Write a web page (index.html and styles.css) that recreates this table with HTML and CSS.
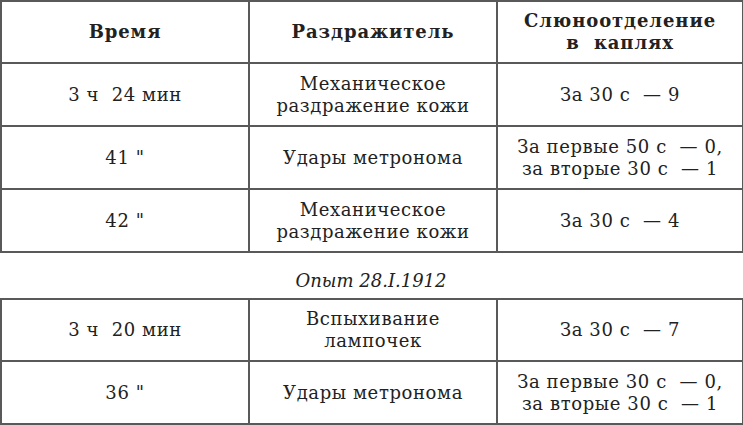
FILE: index.html
```html
<!DOCTYPE html>
<html lang="ru">
<head>
<meta charset="utf-8">
<link rel="stylesheet" href="styles.css">
</head>
<body>
<div class="page">
  <table class="grid">
    <colgroup><col class="c1"><col class="c2"><col class="c3"></colgroup>
    <tr class="first">
      <th>Время</th>
      <th>Раздражитель</th>
      <th>Слюноотделение<br>в&nbsp; каплях</th>
    </tr>
    <tr>
      <td>3 ч&nbsp; 24 мин</td>
      <td>Механическое<br>раздражение кожи</td>
      <td>За 30 с&nbsp; — 9</td>
    </tr>
    <tr>
      <td>41 "</td>
      <td>Удары метронома</td>
      <td>За первые 50 с&nbsp; — 0,<br>за вторые 30 с&nbsp; — 1</td>
    </tr>
    <tr>
      <td>42 "</td>
      <td>Механическое<br>раздражение кожи</td>
      <td>За 30 с&nbsp; — 4</td>
    </tr>
  </table>
  <p class="caption">Опыт 28.I.1912</p>
  <table class="grid">
    <colgroup><col class="c1"><col class="c2"><col class="c3"></colgroup>
    <tr class="first">
      <td>3 ч&nbsp; 20 мин</td>
      <td>Вспыхивание<br>лампочек</td>
      <td>За 30 с&nbsp; — 7</td>
    </tr>
    <tr>
      <td>36 "</td>
      <td>Удары метронома</td>
      <td>За первые 30 с&nbsp; — 0,<br>за вторые 30 с&nbsp; — 1</td>
    </tr>
  </table>
</div>
</body>
</html>
```
FILE: styles.css
```css
html, body {
  margin: 0;
  padding: 0;
  background: #ffffff;
}
.page {
  width: 742px;
  font-family: "DejaVu Serif", "Liberation Serif", "Times New Roman", serif;
  color: #222222;
}
.grid {
  width: 742px;
  border-collapse: collapse;
  table-layout: fixed;
}
.c1 { width: 248px; }
.c2 { width: 248px; }
.c3 { width: 246px; }
.grid td, .grid th {
  border: 2px solid #595959;
  height: 61px;
  padding: 0;
  text-align: center;
  vertical-align: middle;
  font-size: 18px;
  line-height: 22px;
  letter-spacing: 0.6px;
  font-weight: normal;
}
.grid .first td, .grid .first th {
  height: 60px;
}
.grid th {
  font-weight: bold;
  letter-spacing: 0.9px;
}
.caption {
  margin: 0;
  height: 45px;
  line-height: 24px;
  padding-top: 16px;
  box-sizing: border-box;
  text-align: center;
  font-style: italic;
  font-size: 18px;
}
```
